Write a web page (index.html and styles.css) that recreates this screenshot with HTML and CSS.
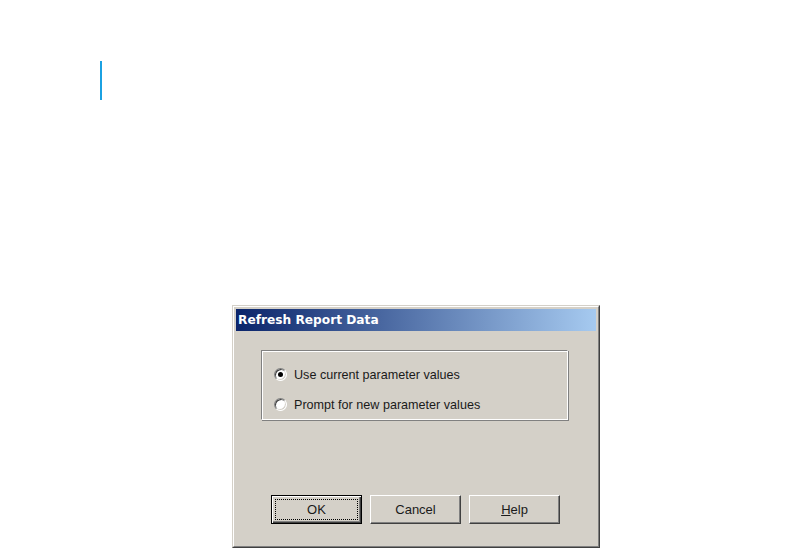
FILE: index.html
```html
<!DOCTYPE html>
<html lang="en">
<head>
    <meta charset="UTF-8">
    <title>Refresh Report Data</title>
    <link rel="stylesheet" href="styles.css">
</head>
<body>
    <div class="caret"></div>

    <div class="dialog">
        <div class="dialog-inner">
            <div class="titlebar">Refresh Report Data</div>

            <div class="dialog-body">
                <div class="groupbox">
                    <label class="option">
                        <span class="radio checked"></span>
                        <span>Use current parameter values</span>
                    </label>
                    <label class="option">
                        <span class="radio"></span>
                        <span>Prompt for new parameter values</span>
                    </label>
                </div>

                <div class="buttons">
                    <button class="btn default"><span class="focus">OK</span></button>
                    <button class="btn"><span class="focus-none">Cancel</span></button>
                    <button class="btn"><span class="focus-none"><u>H</u>elp</span></button>
                </div>
            </div>
        </div>
    </div>
</body>
</html>
```

FILE: styles.css
```css
/* Page */
body {
    margin: 0;
    background-color: #ffffff;
    font-family: 'Liberation Sans', Arial, sans-serif;
    overflow: hidden;
}

/* Blue text caret in the top left */
.caret {
    width: 2px;
    height: 39px;
    margin: 61px 0 0 100px;
    background-color: #1ba1e2;
}

/* Dialog window (classic raised frame) */
.dialog {
    width: 366px;
    height: 241px;
    margin: 205px 0 0 232px;
    border: 1px solid;
    border-color: #d4d0c8 #404040 #404040 #d4d0c8;
    background-color: #d4d0c8;
}

.dialog-inner {
    height: 235px;
    border: 1px solid;
    border-color: #ffffff #808080 #808080 #ffffff;
    padding: 2px;
}

.titlebar {
    height: 22px;
    line-height: 22px;
    padding-left: 2px;
    color: #ffffff;
    font-family: 'DejaVu Sans', Verdana, sans-serif;
    font-weight: bold;
    font-size: 12.2px;
    background: linear-gradient(to right, #0a246a, #a6caf0);
    white-space: nowrap;
}

.dialog-body {
    padding: 19px 0 0 25px;
}

/* Group box with etched border */
.groupbox {
    border: 1px solid;
    border-color: #808080 #ffffff #ffffff #808080;
    box-shadow: inset 1px 1px 0 #ffffff, 1px 1px 0 #808080;
    display: flex;
    flex-direction: column;
    gap: 17px;
    padding: 17px 0 0 12px;
    width: 293px;
    height: 51px;
}

.option {
    display: flex;
    align-items: center;
    gap: 7px;
    font-size: 12.6px;
    color: #1a1a1a;
    height: 13px;
}

/* Classic sunken radio */
.radio {
    width: 11px;
    height: 11px;
    border-radius: 50%;
    background-color: #ffffff;
    border: 1px solid;
    border-color: #808080 #ffffff #ffffff #808080;
    box-shadow: inset 1px 1px 0 #404040, inset -1px -1px 0 #d4d0c8;
    position: relative;
    flex: none;
}

.radio.checked::after {
    content: "";
    position: absolute;
    left: 3px;
    top: 3px;
    width: 5px;
    height: 5px;
    border-radius: 50%;
    background-color: #000000;
}

/* Buttons */
.buttons {
    display: flex;
    gap: 8px;
    margin: 75px 0 0 10px;
}

.btn {
    width: 91px;
    height: 29px;
    padding: 0;
    font-family: 'Liberation Sans', Arial, sans-serif;
    font-size: 13px;
    color: #1a1a1a;
    background-color: #d4d0c8;
    border: 1px solid;
    border-color: #ffffff #404040 #404040 #ffffff;
    box-shadow: inset -1px -1px 0 #808080, inset 1px 1px 0 #d4d0c8;
    display: flex;
    align-items: center;
    justify-content: center;
}

.btn.default {
    border: 1px solid #000000;
    box-shadow: inset 1px 1px 0 #ffffff, inset -1px -1px 0 #404040, inset -2px -2px 0 #808080;
}

.focus {
    display: flex;
    align-items: center;
    justify-content: center;
    width: 81px;
    height: 19px;
    border: 1px dotted #000000;
}

.focus-none {
    display: block;
}
```
